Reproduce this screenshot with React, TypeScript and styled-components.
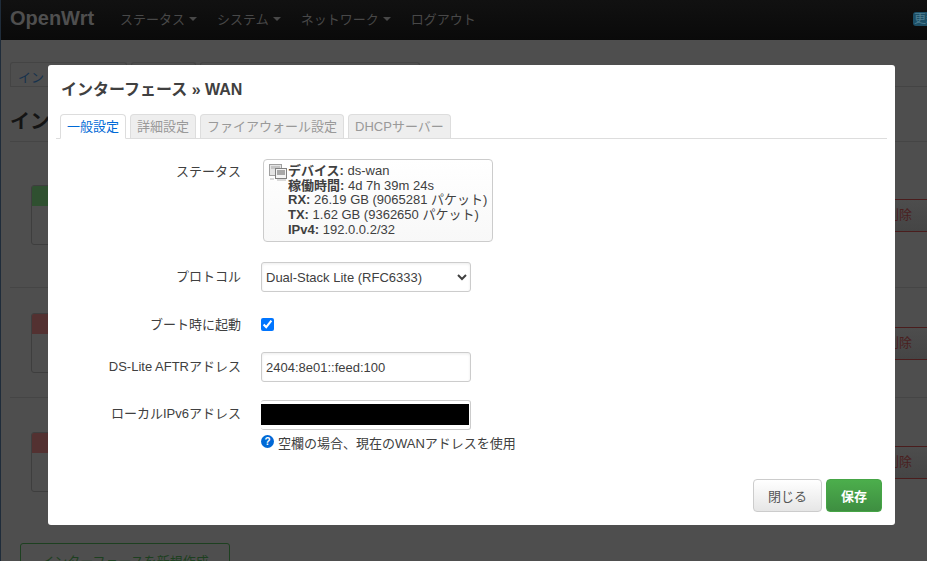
import React from 'react'
import styled, { createGlobalStyle } from 'styled-components'

const FONT = `"Liberation Sans", "Noto Sans CJK JP", sans-serif`

const GlobalStyle = createGlobalStyle`
  html, body {
    margin: 0;
    padding: 0;
    height: 100%;
    overflow: hidden;
    background: #4d4d4d;
    font-family: ${FONT};
    font-size: 13px;
    color: #404040;
  }
  * { box-sizing: border-box; }
`

const Page = styled.div`
  position: relative;
  width: 927px;
  height: 561px;
  overflow: hidden;
  background: #4e4e4e;
  border-left: 1px solid #1f2c3a;
`

const NavBar = styled.div`
  display: flex;
  align-items: center;
  height: 40px;
  padding: 0 9px 3px;
  background: linear-gradient(#111111, #0a0a0a);
`

const Brand = styled.div`
  width: 110px;
  font-size: 20px;
  font-weight: 700;
  color: #4f4f4f;
`

const NavItem = styled.div<{ $caret?: boolean }>`
  display: flex;
  align-items: center;
  gap: 4px;
  margin-right: 20px;
  font-size: 13px;
  color: #484848;
  &::after {
    content: '';
    display: ${({ $caret }) => ($caret ? 'block' : 'none')};
    border-top: 4px solid #484848;
    border-left: 4px solid transparent;
    border-right: 4px solid transparent;
  }
`

const Badge = styled.div`
  margin-left: auto;
  margin-right: -31px;
  width: 36px;
  height: 14px;
  padding-left: 1px;
  border-radius: 3px;
  background: #1d4f66;
  color: #4f7f92;
  font-size: 12px;
  line-height: 14px;
  white-space: nowrap;
  overflow: hidden;
`

const Content = styled.div`
  padding: 22px 0 0 9px;
`

const BackTabs = styled.div`
  display: flex;
  gap: 4px;
  height: 25px;
  border-bottom: 1px solid #444444;
`

const BackTab = styled.div<{ $width: number }>`
  width: ${({ $width }) => $width}px;
  border: 1px solid #444444;
  border-bottom: 0;
  border-radius: 3px 3px 0 0;
  padding: 4px 7px;
  color: #16324d;
  white-space: nowrap;
  overflow: hidden;
`

const BackTitle = styled.div`
  margin-top: 21px;
  height: 34px;
  padding-top: 2px;
  font-size: 20px;
  line-height: 24px;
  font-weight: 700;
  color: #141414;
  border-bottom: 1px solid #454545;
  overflow: hidden;
`

const IfaceRows = styled.div`
  display: flex;
  flex-direction: column;
`

const IfaceRow = styled.div<{ $height: number; $last?: boolean }>`
  display: flex;
  align-items: flex-start;
  justify-content: space-between;
  height: ${({ $height }) => $height}px;
  border-bottom: ${({ $last }) => ($last ? '0' : '1px solid #454545')};
`

const IfaceCard = styled.div<{ $top: number; $color: string }>`
  width: 80px;
  height: 60px;
  margin: ${({ $top }) => $top}px 0 0 21px;
  border: 1px solid #3e3e3e;
  border-radius: 3px;
  overflow: hidden;
  &::before {
    content: '';
    display: block;
    height: 20px;
    background: ${({ $color }) => $color};
  }
`

const DeleteButton = styled.div<{ $top: number }>`
  width: 60px;
  height: 33px;
  margin-top: ${({ $top }) => $top}px;
  padding: 7px 15px 0 0;
  text-align: right;
  border-top: 1px solid #4a1d1d;
  border-bottom: 1px solid #4a1d1d;
  background: linear-gradient(#4d4d4d, #454545);
  color: #4a1f1f;
  font-size: 13px;
  line-height: 16px;
`

const NewButton = styled.div`
  width: 210px;
  height: 33px;
  margin: 45px 0 0 10px;
  padding-top: 7px;
  text-align: center;
  border: 1px solid #1d4020;
  border-radius: 3px;
  color: #1d4020;
  white-space: nowrap;
`

const Modal = styled.div`
  position: absolute;
  left: 47px;
  top: 65px;
  width: 847px;
  height: 460px;
  display: flex;
  flex-direction: column;
  padding: 15px 8px 13px;
  background: #ffffff;
  border-radius: 3px;
`

const ModalTitle = styled.h4`
  margin: 0 0 0 5px;
  height: 34px;
  font-size: 16px;
  line-height: 20px;
  font-weight: 700;
  color: #404040;
`

const Tabs = styled.div`
  display: flex;
  gap: 4px;
  height: 25px;
  padding-left: 4px;
  border-bottom: 1px solid #dddddd;
`

const Tab = styled.div<{ $active?: boolean }>`
  height: ${({ $active }) => ($active ? '25px' : '24px')};
  padding: 3px 6px 0;
  line-height: 18px;
  border: 1px solid #dddddd;
  border-bottom: ${({ $active }) => ($active ? '1px solid #ffffff' : '0')};
  border-radius: 4px 4px 0 0;
  background: ${({ $active }) => ($active ? '#ffffff' : '#eeeeee')};
  color: ${({ $active }) => ($active ? '#0069d6' : '#999999')};
  white-space: nowrap;
`

const Form = styled.div`
  flex: 1;
  display: flex;
  flex-direction: column;
`

const Row = styled.div<{ $top: number }>`
  display: flex;
  margin-top: ${({ $top }) => $top}px;
`

const Label = styled.div<{ $pad: number }>`
  width: 185px;
  padding-top: ${({ $pad }) => $pad}px;
  line-height: 16px;
  text-align: right;
  color: #404040;
  flex: none;
`

const Field = styled.div`
  margin-left: 20px;
`

const StatusBox = styled.div`
  display: flex;
  width: 230px;
  height: 83px;
  margin-left: 2px;
  padding: 4px 4px 0 5px;
  border: 1px solid #cccccc;
  border-radius: 4px;
  background: linear-gradient(#ffffff, #f8f8f8);
  line-height: 14.7px;
  font-size: 13px;
  color: #404040;
  white-space: nowrap;
`

const StatusIcon = styled.svg`
  flex: none;
  width: 19px;
  height: 19px;
`

const Select = styled.select`
  display: block;
  width: 210px;
  height: 30px;
  padding: 0;
  border: 1px solid #cccccc;
  border-radius: 3px;
  background: #ffffff;
  font-family: ${FONT};
  font-size: 13px;
  color: #404040;
  box-shadow: inset 0 1px 3px rgba(0, 0, 0, 0.08);
`

const Check = styled.input`
  display: block;
  width: 13px;
  height: 13px;
  margin: 2px 0 0;
  accent-color: #0075ff;
`

const TextBox = styled.input`
  display: block;
  width: 210px;
  height: 30px;
  padding: 0 4px;
  border: 1px solid #cccccc;
  border-radius: 3px;
  font-family: ${FONT};
  font-size: 13px;
  color: #404040;
  box-shadow: inset 0 1px 3px rgba(0, 0, 0, 0.08);
  outline: none;
`

const Redacted = styled.div`
  width: 210px;
  height: 30px;
  padding: 3px 1px 4px 0;
  border: 1px solid #cccccc;
  border-left: 0;
  border-radius: 3px;
  &::before {
    content: '';
    display: block;
    height: 100%;
    background: #000000;
  }
`

const Help = styled.div`
  display: flex;
  align-items: center;
  gap: 4px;
  margin-top: 5px;
  font-size: 13px;
  line-height: 18px;
  color: #404040;
`

const HelpIcon = styled.span`
  flex: none;
  width: 13px;
  height: 13px;
  margin-top: -5px;
  border-radius: 50%;
  background: #0069d6;
  color: #ffffff;
  font-size: 10px;
  font-weight: 700;
  line-height: 13px;
  text-align: center;
`

const Actions = styled.div`
  display: flex;
  justify-content: flex-end;
  gap: 4px;
  padding-right: 5px;
`

const Button = styled.button<{ $save?: boolean }>`
  height: 33px;
  width: ${({ $save }) => ($save ? '56px' : '69px')};
  padding: 0;
  border: 1px solid ${({ $save }) => ($save ? '#46a546' : '#cccccc')};
  border-radius: 4px;
  background: ${({ $save }) =>
    $save ? 'linear-gradient(#4cae4c, #3e8e41)' : 'linear-gradient(#ffffff, #e6e6e6)'};
  color: ${({ $save }) => ($save ? '#ffffff' : '#555555')};
  font-family: ${FONT};
  font-size: 13px;
  font-weight: ${({ $save }) => ($save ? 700 : 400)};
`

const ifaces = [
  { height: 146, top: 43, color: '#2f5030', del: 57 },
  { height: 110, top: 25, color: '#533131', del: 39 },
  { height: 100, top: 34, color: '#533131', del: 48 },
]

export default function App() {
  return (
    <Page>
      <GlobalStyle />
      <NavBar>
        <Brand>OpenWrt</Brand>
        <NavItem $caret>ステータス</NavItem>
        <NavItem $caret>システム</NavItem>
        <NavItem $caret>ネットワーク</NavItem>
        <NavItem>ログアウト</NavItem>
        <Badge>更新</Badge>
      </NavBar>
      <Content>
        <BackTabs>
          <BackTab $width={117}>イン</BackTab>
          <BackTab $width={65} />
          <BackTab $width={220} />
        </BackTabs>
        <BackTitle>イン</BackTitle>
        <IfaceRows>
          {ifaces.map((row, i) => (
            <IfaceRow key={i} $height={row.height} $last={i === ifaces.length - 1}>
              <IfaceCard $top={row.top} $color={row.color} />
              <DeleteButton $top={row.del}>削除</DeleteButton>
            </IfaceRow>
          ))}
        </IfaceRows>
        <NewButton>インターフェースを新規作成</NewButton>
      </Content>

      <Modal>
        <ModalTitle>インターフェース » WAN</ModalTitle>
        <Tabs>
          <Tab $active>一般設定</Tab>
          <Tab>詳細設定</Tab>
          <Tab>ファイアウォール設定</Tab>
          <Tab>DHCPサーバー</Tab>
        </Tabs>
        <Form>
          <Row $top={20}>
            <Label $pad={5}>ステータス</Label>
            <Field>
              <StatusBox>
                <StatusIcon viewBox="0 0 19 19">
                  <rect x="0.5" y="0.5" width="12" height="11" fill="#e4e4e4" stroke="#a0a0a0" />
                  <rect x="2" y="2" width="9" height="3" fill="#c4c4c4" />
                  <rect x="6.5" y="4.5" width="11" height="10" fill="#f4f4f4" stroke="#808080" />
                  <rect x="8" y="6" width="8" height="5" fill="#a8a8a8" />
                  <path d="M1 15h4M8 16h9" stroke="#b5b5b5" />
                </StatusIcon>
                <div>
                  <div><b>デバイス:</b> ds-wan</div>
                  <div><b>稼働時間:</b> 4d 7h 39m 24s</div>
                  <div><b>RX:</b> 26.19 GB (9065281 パケット)</div>
                  <div><b>TX:</b> 1.62 GB (9362650 パケット)</div>
                  <div><b>IPv4:</b> 192.0.0.2/32</div>
                </div>
              </StatusBox>
            </Field>
          </Row>
          <Row $top={20}>
            <Label $pad={7}>プロトコル</Label>
            <Field>
              <Select defaultValue="dslite">
                <option value="dslite">Dual-Stack Lite (RFC6333)</option>
              </Select>
            </Field>
          </Row>
          <Row $top={24}>
            <Label $pad={1}>ブート時に起動</Label>
            <Field>
              <Check type="checkbox" defaultChecked />
            </Field>
          </Row>
          <Row $top={19}>
            <Label $pad={7}>DS-Lite AFTRアドレス</Label>
            <Field>
              <TextBox defaultValue="2404:8e01::feed:100" />
            </Field>
          </Row>
          <Row $top={18}>
            <Label $pad={6}>ローカルIPv6アドレス</Label>
            <Field>
              <Redacted />
              <Help>
                <HelpIcon>?</HelpIcon>
                空欄の場合、現在のWANアドレスを使用
              </Help>
            </Field>
          </Row>
        </Form>
        <Actions>
          <Button>閉じる</Button>
          <Button $save>保存</Button>
        </Actions>
      </Modal>
    </Page>
  )
}
